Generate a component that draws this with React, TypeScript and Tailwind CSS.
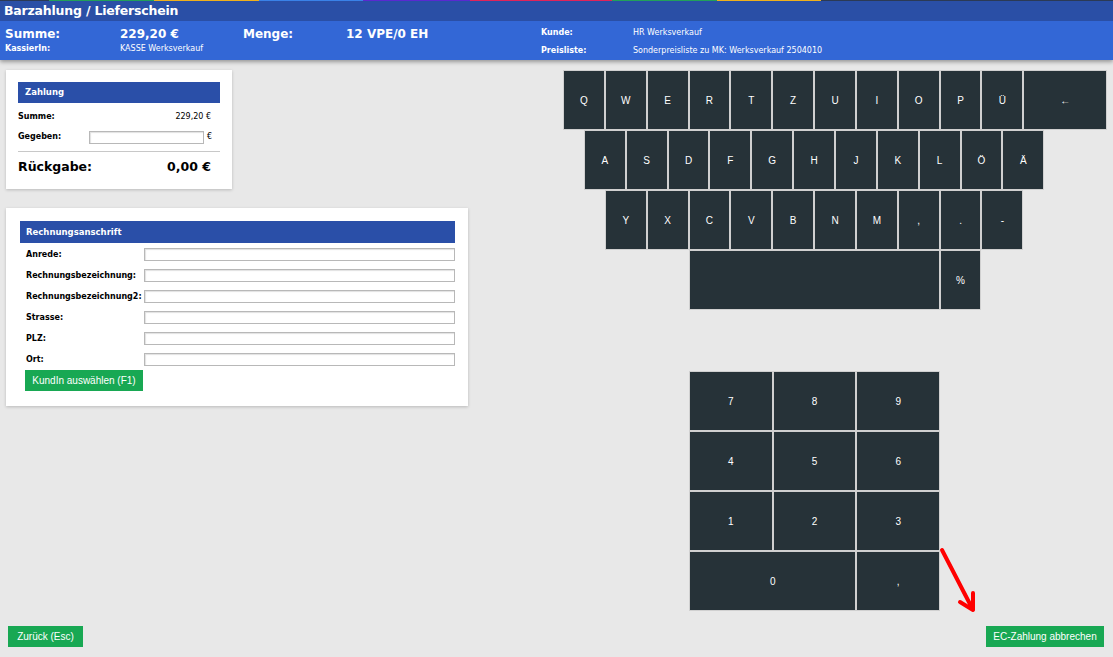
import React from "react";

const stripe = [
  { w: "w-[49px]", c: "bg-[#2b3a55]" },
  { w: "w-[105px]", c: "bg-[#22a05a]" },
  { w: "w-[105px]", c: "bg-[#f0b01c]" },
  { w: "w-[104px]", c: "bg-[#3a82e8]" },
  { w: "w-[107px]", c: "bg-[#5a2ad0]" },
  { w: "w-[142px]", c: "bg-[#e0245a]" },
  { w: "w-[105px]", c: "bg-[#22a05a]" },
  { w: "w-[104px]", c: "bg-[#f0b01c]" },
  { w: "flex-1", c: "bg-[#2b3a55]" },
];

const row1 = ["Q", "W", "E", "R", "T", "Z", "U", "I", "O", "P", "Ü"];
const row2 = ["A", "S", "D", "F", "G", "H", "J", "K", "L", "Ö", "Ä"];
const row3 = ["Y", "X", "C", "V", "B", "N", "M", ",", ".", "-"];

const addressFields = ["Anrede:", "Rechnungsbezeichnung:", "Rechnungsbezeichnung2:", "Strasse:", "PLZ:", "Ort:"];

function Key({ label, className = "col-span-2" }: { label: string; className?: string }) {
  return (
    <div className={`${className} h-[60px] bg-[#263238] border border-[#d0d0d0] flex items-center justify-center text-white text-[10px] font-['Liberation_Sans',Arial,sans-serif]`}>
      {label}
    </div>
  );
}

function TextInput({ className = "" }: { className?: string }) {
  return <div className={`h-[13px] bg-white border border-[#b8b8b8] shadow-[inset_1px_1px_1px_rgba(0,0,0,0.12)] ${className}`}></div>;
}

export default function App() {
  return (
    <div className="relative w-[1113px] h-[657px] bg-[#e8e8e8] flex flex-col overflow-hidden font-['DejaVu_Sans',Verdana,sans-serif]">
      {/* Header */}
      <header className="shadow-[0_2px_4px_rgba(0,0,0,0.35)] z-10">
        <div className="flex h-[1px]">
          {stripe.map((s, i) => (
            <div key={i} className={`${s.w} ${s.c} h-full`}></div>
          ))}
        </div>
        <div className="h-[20px] bg-[#2a4fa6] flex items-center pl-[4px] text-white font-bold text-[12.5px] tracking-[-0.2px]">
          Barzahlung / Lieferschein
        </div>
        <div className="h-[39px] bg-[#3367d6] flex text-white">
          <div className="w-[541px] pl-[5px] pt-[5px]">
            <div className="flex items-center h-[15px] font-bold text-[12px]">
              <span className="w-[115px]">Summe:</span>
              <span className="w-[123px]">229,20 €</span>
              <span className="w-[103px]">Menge:</span>
              <span>12 VPE/0 EH</span>
            </div>
            <div className="flex items-center h-[16px] text-[8px]">
              <span className="w-[115px] font-bold">KassierIn:</span>
              <span>KASSE Werksverkauf</span>
            </div>
          </div>
          <div className="pt-[5px] text-[8px]">
            <div className="flex items-center h-[14px]">
              <span className="w-[92px] font-bold">Kunde:</span>
              <span>HR Werksverkauf</span>
            </div>
            <div className="flex items-center h-[21px]">
              <span className="w-[92px] font-bold">Preisliste:</span>
              <span>Sonderpreisliste zu MK: Werksverkauf 2504010</span>
            </div>
          </div>
        </div>
      </header>

      {/* Main */}
      <main className="flex-1 flex pt-[10px]">
        <div className="w-[563px] pl-[6px] flex flex-col items-start gap-[19px]">
          {/* Zahlung */}
          <div className="w-[226px] bg-white shadow-[0_1px_3px_rgba(0,0,0,0.2)] px-[12px] pt-[12px] pb-[7px]">
            <div className="h-[21px] bg-[#2a4fa8] text-white font-bold text-[8.5px] flex items-center pl-[7px]">Zahlung</div>
            <div className="flex items-center justify-between h-[24px] mt-[2px] text-[8px] pr-[9px]">
              <span className="font-bold">Summe:</span>
              <span>229,20 €</span>
            </div>
            <div className="flex items-center h-[16px] text-[8px]">
              <span className="w-[71px] font-bold">Gegeben:</span>
              <TextInput className="w-[115px]" />
              <span className="ml-[3px]">€</span>
            </div>
            <div className="mt-[6px] border-t border-[#c8c8c8]"></div>
            <div className="flex items-center justify-between h-[30px] font-bold text-[12.5px] pr-[9px]">
              <span>Rückgabe:</span>
              <span>0,00 €</span>
            </div>
          </div>

          {/* Rechnungsanschrift */}
          <div className="w-[462px] bg-white shadow-[0_1px_3px_rgba(0,0,0,0.2)] pl-[14px] pr-[13px] pt-[13px] pb-[15px]">
            <div className="h-[22px] bg-[#2a4fa8] text-white font-bold text-[8.5px] flex items-center pl-[6px]">Rechnungsanschrift</div>
            <div className="pt-[1px]">
              {addressFields.map((f) => (
                <div key={f} className="flex items-center h-[21px] pl-[6px] text-[8px]">
                  <span className="w-[118px] font-bold whitespace-nowrap">{f}</span>
                  <TextInput className="flex-1" />
                </div>
              ))}
            </div>
            <button className="block ml-[5px] w-[118px] h-[21px] bg-[#18a853] text-white text-[10px] font-['Liberation_Sans',Arial,sans-serif]">
              KundIn auswählen (F1)
            </button>
          </div>
        </div>

        {/* Keyboard */}
        <div className="w-[544px]">
          <div className="grid grid-cols-[repeat(26,minmax(0,1fr))]">
            {row1.map((k) => (
              <Key key={k} label={k} />
            ))}
            <Key label="←" className="col-span-4" />
            <Key label="A" className="col-span-2 col-start-2" />
            {row2.slice(1).map((k) => (
              <Key key={k} label={k} />
            ))}
            <Key label="Y" className="col-span-2 col-start-3" />
            {row3.slice(1).map((k) => (
              <Key key={k} label={k} />
            ))}
            <Key label="" className="col-span-12 col-start-7" />
            <Key label="%" className="col-span-2" />
          </div>
          <div className="mt-[61px] ml-[126px] w-[251px] grid grid-cols-3">
            {["7", "8", "9", "4", "5", "6", "1", "2", "3"].map((k) => (
              <Key key={k} label={k} className="col-span-1" />
            ))}
            <Key label="0" className="col-span-2" />
            <Key label="," className="col-span-1" />
          </div>
        </div>
      </main>

      {/* Footer */}
      <footer className="flex justify-between items-end px-[8px] pb-[10px] pr-[9px] font-['Liberation_Sans',Arial,sans-serif]">
        <button className="w-[75px] h-[21px] bg-[#18a853] text-white text-[10px]">Zurück (Esc)</button>
        <button className="w-[118px] h-[21px] bg-[#18a853] text-white text-[10px]">EC-Zahlung abbrechen</button>
      </footer>

      {/* Red arrow annotation */}
      <svg className="absolute left-[935px] top-[545px]" width="50" height="72" viewBox="0 0 50 72">
        <path d="M7 5 L37 63" stroke="#ff0000" strokeWidth="4" fill="none" strokeLinecap="round" />
        <path d="M25 57 L38 65 L38 48" stroke="#ff0000" strokeWidth="4" fill="none" strokeLinecap="round" strokeLinejoin="round" />
      </svg>
    </div>
  );
}
